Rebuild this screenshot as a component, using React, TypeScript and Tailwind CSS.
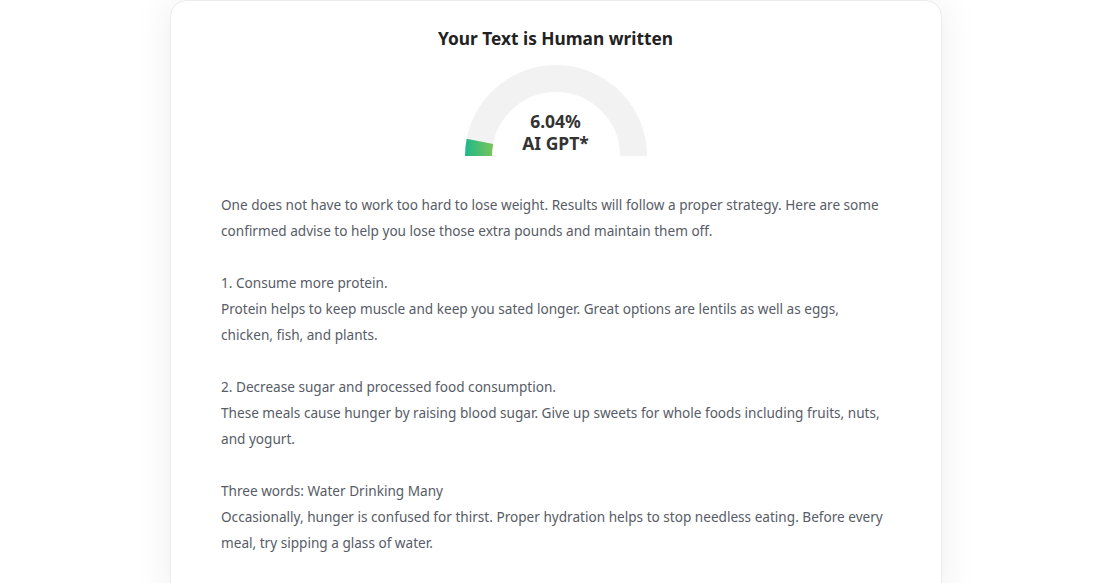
import React from 'react';

const BODY = `One does not have to work too hard to lose weight. Results will follow a proper strategy. Here are some confirmed advise to help you lose those extra pounds and maintain them off.

1. Consume more protein.
Protein helps to keep muscle and keep you sated longer. Great options are lentils as well as eggs, chicken, fish, and plants.

2. Decrease sugar and processed food consumption.
These meals cause hunger by raising blood sugar. Give up sweets for whole foods including fruits, nuts, and yogurt.

Three words: Water Drinking Many
Occasionally, hunger is confused for thirst. Proper hydration helps to stop needless eating. Before every meal, try sipping a glass of water.`;

function Gauge({ percent }: { percent: number }) {
  const cx = 91;
  const cy = 91;
  const r = 77.5;
  const a = (percent / 100) * Math.PI;
  const ex = cx - r * Math.cos(a);
  const ey = cy - r * Math.sin(a);
  return (
    <div className="relative w-[182px] h-[91px]">
      <svg width="182" height="91" viewBox="0 0 182 91" className="block">
        <defs>
          <linearGradient id="g" gradientUnits="userSpaceOnUse" x1="0" y1="0" x2="28" y2="0">
            <stop offset="0" stopColor="#1fb88a" />
            <stop offset="1" stopColor="#78c45a" />
          </linearGradient>
        </defs>
        <path
          d={`M ${cx - r} ${cy} A ${r} ${r} 0 0 1 ${cx + r} ${cy}`}
          fill="none"
          stroke="#f2f2f2"
          strokeWidth="27"
        />
        <path
          d={`M ${cx - r} ${cy} A ${r} ${r} 0 0 1 ${ex} ${ey}`}
          fill="none"
          stroke="url(#g)"
          strokeWidth="27"
        />
      </svg>
      <div className="absolute inset-x-0 top-[45px] text-center text-[17.5px] font-bold leading-[22px] text-[#333]">
        <div>{percent}%</div>
        <div>AI GPT*</div>
      </div>
    </div>
  );
}

export default function App() {
  return (
    <div
      className="w-[1104px] h-[583px] bg-white overflow-hidden"
      style={{ fontFamily: '"Noto Sans", "Open Sans", sans-serif' }}
    >
      <div className="ml-[170px] w-[772px] h-[600px] rounded-t-2xl border border-[#ececec] bg-white shadow-[0_0_40px_rgba(0,0,0,0.07)] pl-[50px] pr-[51px] pt-[25px]">
        <h1 className="text-center text-[17.3px] font-bold leading-[26px] text-[#222]">
          Your Text is Human written
        </h1>
        <div className="flex justify-center mt-[13px]">
          <Gauge percent={6.04} />
        </div>
        <p className="mt-[36px] whitespace-pre-line text-[13.6px] leading-[26px] text-[#575c66]">
          {BODY}
        </p>
      </div>
    </div>
  );
}
